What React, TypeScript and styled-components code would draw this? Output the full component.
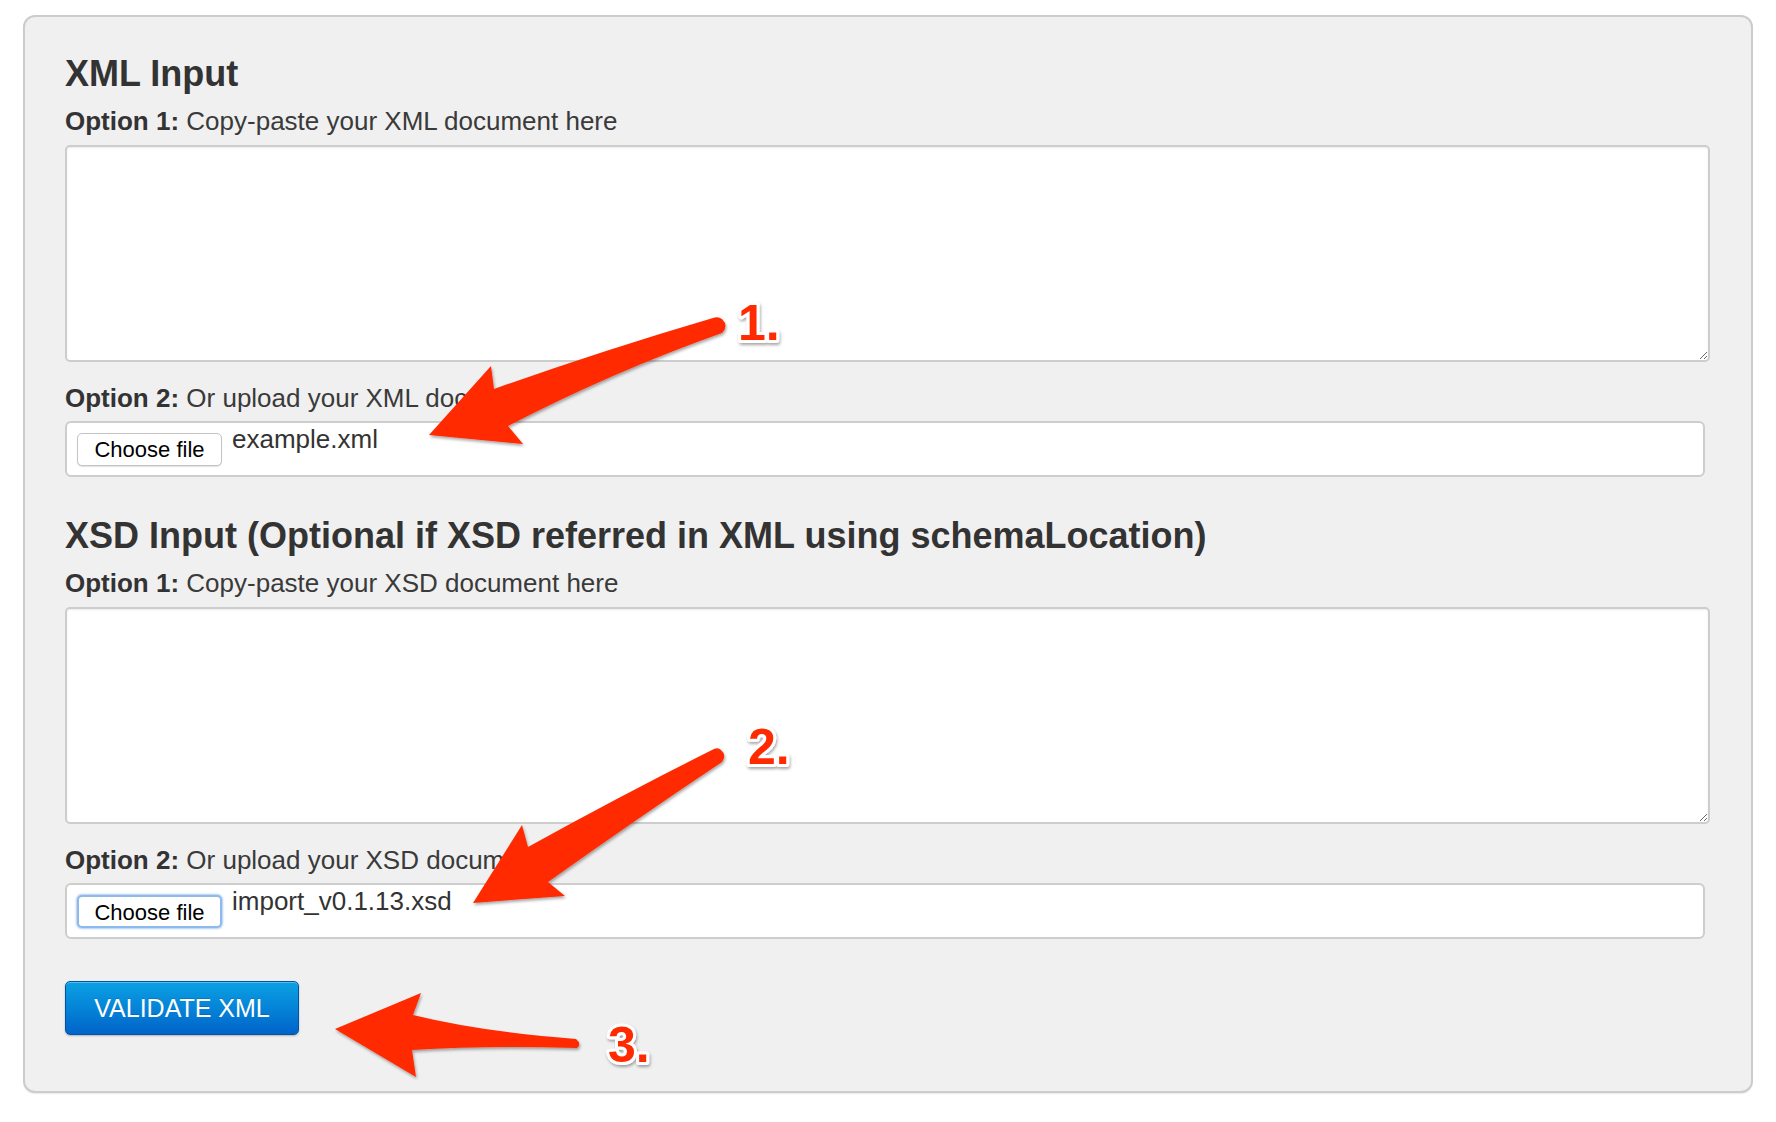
import { FunctionComponent } from "react";
import styled, { createGlobalStyle, css } from "styled-components";

const GlobalStyle = createGlobalStyle`
  html, body {
    margin: 0;
    padding: 0;
    background: #ffffff;
  }
  body {
    font-family: "Liberation Sans", Arial, Helvetica, sans-serif;
    color: #333333;
  }
`;

const App: FunctionComponent = () => {
  return (
    <>
      <GlobalStyle />
      <Page>
        <Panel>
          <Heading>XML Input</Heading>
          <Label>
            <b>Option 1:</b> Copy-paste your XML document here
          </Label>
          <TextArea />
          <Label $spaced>
            <b>Option 2:</b> Or upload your XML document
          </Label>
          <FileBox>
            <ChooseFile>Choose file</ChooseFile>
            <FileName>example.xml</FileName>
          </FileBox>

          <Heading $second>
            XSD Input (Optional if XSD referred in XML using schemaLocation)
          </Heading>
          <Label>
            <b>Option 1:</b> Copy-paste your XSD document here
          </Label>
          <TextArea />
          <Label $spaced>
            <b>Option 2:</b> Or upload your XSD document
          </Label>
          <FileBox>
            <ChooseFile $focused>Choose file</ChooseFile>
            <FileName>import_v0.1.13.xsd</FileName>
          </FileBox>

          <ValidateButton>VALIDATE XML</ValidateButton>
        </Panel>
      </Page>

      {/* annotation arrows drawn over the form */}
      <Overlay width="1776" height="1122" viewBox="0 0 1776 1122">
        <defs>
          <filter id="shade" x="-20%" y="-20%" width="140%" height="140%">
            <feDropShadow dx="1" dy="2" stdDeviation="1.6" floodColor="#000" floodOpacity="0.35" />
          </filter>
        </defs>
        <g filter="url(#shade)" fill="#ff2a00">
          <path d="M 713 318 Q 604 350 494 389 L 491 366 L 429 435 L 523 444 L 508 426 Q 612 372 722 333 Q 729 326 722 319 Q 718 316 713 318 Z" />
          <path d="M 714 749 Q 622 795 528 847 L 522 825 L 473 903 L 565 896 L 548 882 Q 638 818 722 762 Q 727 755 721 750 Q 718 747 714 749 Z" />
          <path d="M 576 1039 Q 482 1032 413 1015 L 421 993 L 335 1029 L 416 1077 L 412 1050 Q 486 1045 577 1048 Q 582 1044 576 1039 Z" />
        </g>
        <g filter="url(#shade)">
          <Marker x="738" y="340">1.</Marker>
          <Marker x="748" y="764">2.</Marker>
          <Marker x="608" y="1062">3.</Marker>
        </g>
      </Overlay>
    </>
  );
};
export default App;

const Page = styled.div`
  padding: 15px 23px 29px 23px;
`;

const Panel = styled.div`
  width: 1730px;
  box-sizing: border-box;
  background: #f0f0f0;
  border: 2px solid #cccccc;
  border-radius: 12px;
  padding: 37px 41px 56px 40px;
  box-shadow: 0 1px 1px rgba(0, 0, 0, 0.08);
`;

const Heading = styled.h2<{ $second?: boolean }>`
  margin: 0;
  font-size: 36px;
  line-height: 40px;
  font-weight: 700;
  color: #333333;
  ${(p) =>
    p.$second &&
    css`
      margin-top: 39px;
    `}
`;

const Label = styled.div<{ $spaced?: boolean }>`
  font-size: 26px;
  line-height: 30px;
  color: #3a3a3a;
  margin: 12px 0 9px;
  b {
    font-weight: 700;
    color: #333333;
  }
  ${(p) =>
    p.$spaced &&
    css`
      margin: 21px 0 8px;
    `}
`;

const TextArea = styled.textarea`
  display: block;
  width: 100%;
  height: 217px;
  box-sizing: border-box;
  margin: 0;
  background: #ffffff;
  border: 2px solid #cdcdcd;
  border-radius: 5px;
  box-shadow: inset 0 1px 2px rgba(0, 0, 0, 0.08);
  resize: vertical;
  font-family: "Liberation Mono", monospace;
  font-size: 18px;
  outline: none;
`;

const FileBox = styled.div`
  display: flex;
  align-items: flex-start;
  width: 1640px;
  height: 56px;
  box-sizing: border-box;
  padding: 10px;
  background: #ffffff;
  border: 2px solid #cdcdcd;
  border-radius: 6px;
`;

const ChooseFile = styled.button<{ $focused?: boolean }>`
  width: 145px;
  height: 33px;
  box-sizing: border-box;
  margin: 0;
  padding: 0;
  background: #ffffff;
  border: 1px solid #c4c4c4;
  border-radius: 5px;
  box-shadow: 0 1px 1px rgba(0, 0, 0, 0.12);
  font-family: "Liberation Sans", Arial, sans-serif;
  font-size: 22px;
  line-height: 31px;
  color: #000000;
  ${(p) =>
    p.$focused &&
    css`
      border: 2px solid #8db9ec;
      box-shadow: 0 0 2px 1px rgba(120, 170, 230, 0.6);
    `}
`;

const FileName = styled.span`
  margin: -9px 0 0 10px;
  font-size: 26px;
  line-height: 30px;
  color: #333333;
`;

const ValidateButton = styled.button`
  display: block;
  margin-top: 42px;
  width: 234px;
  height: 54px;
  box-sizing: border-box;
  padding: 0;
  border: 1px solid #0054a8;
  border-radius: 5px;
  background: linear-gradient(to bottom, #0aa0e2 0%, #0584d8 50%, #0063c9 100%);
  box-shadow: inset 0 1px 0 rgba(255, 255, 255, 0.3), 0 1px 2px rgba(0, 0, 0, 0.25);
  color: #ffffff;
  font-family: "Liberation Sans", Arial, sans-serif;
  font-size: 25px;
  text-shadow: 0 -1px 0 rgba(0, 0, 0, 0.15);
`;

const Overlay = styled.svg`
  position: absolute;
  top: 0;
  left: 0;
  pointer-events: none;
`;

const Marker = styled.text`
  font-family: "Liberation Sans", Arial, sans-serif;
  font-weight: 700;
  font-size: 50px;
  fill: #ff2a00;
  stroke: #ffffff;
  stroke-width: 6px;
  stroke-linejoin: round;
  paint-order: stroke;
`;
